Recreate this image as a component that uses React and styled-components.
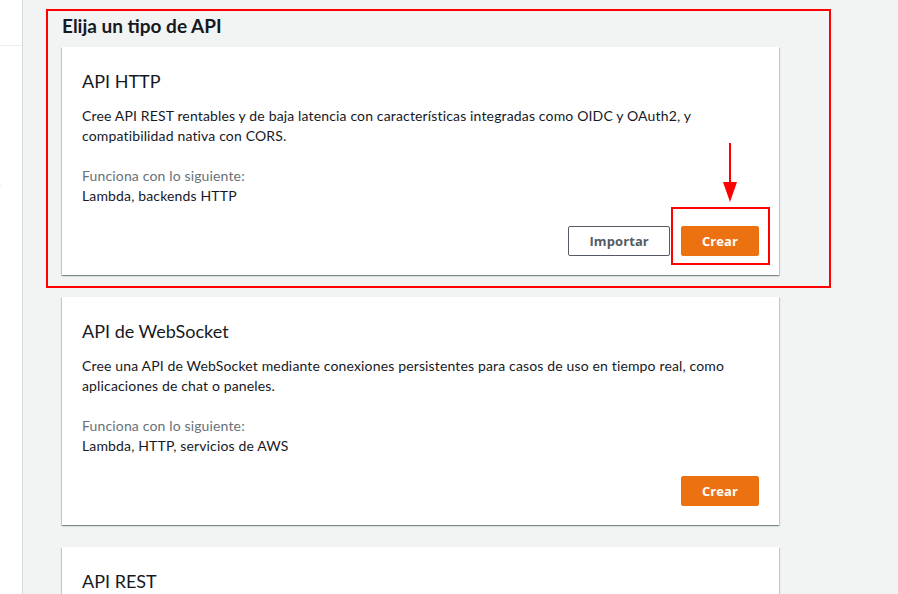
import styled, { createGlobalStyle } from 'styled-components';

const GlobalStyle = createGlobalStyle`
  html, body {
    margin: 0;
    padding: 0;
    background: #f2f3f3;
  }
  body {
    font-family: Lato, "Open Sans", sans-serif;
    color: #16191f;
  }
`;

const Page = styled.div`
  display: flex;
  height: 594px;
  overflow: hidden;
  background: #f2f3f3;
`;

const Sidebar = styled.div`
  width: 22px;
  flex-shrink: 0;
  background: #ffffff;
  border-right: 1px solid #d5dbdb;
`;

const SidebarRule = styled.div`
  height: ${(props) => props.top}px;
  border-bottom: 1px solid #eaeded;
  width: ${(props) => props.width || 22}px;
`;

const Main = styled.div`
  flex: 1;
  padding: 9px 0 0 39px;
`;

const Column = styled.div`
  width: 717px;
  display: flex;
  flex-direction: column;
`;

const Highlight = styled.section`
  margin: 0 -52px 9px -16px;
  padding: 4px 50px 11px 14px;
  border: 2px solid #ff0000;
`;

const Heading = styled.h2`
  margin: 0 0 10px;
  font-size: 19px;
  line-height: 22px;
  font-weight: 700;
  color: #16191f;
`;

const Card = styled.div`
  background: #ffffff;
  padding: 22px 20px 19px;
  margin-bottom: ${(props) => props.gap || 0}px;
  box-shadow: 0 1px 1px 0 rgba(0, 28, 36, 0.3),
    1px 1px 1px 0 rgba(0, 28, 36, 0.15), -1px 1px 1px 0 rgba(0, 28, 36, 0.15);
`;

const CardTitle = styled.h3`
  margin: 0 0 13px;
  font-size: 18px;
  line-height: 24px;
  font-weight: 400;
  color: #16191f;
`;

const Text = styled.p`
  margin: 0;
  font-size: 14px;
  line-height: 20px;
  letter-spacing: 0.15px;
  color: ${(props) => (props.muted ? '#687078' : '#16191f')};
`;

const Works = styled.div`
  margin-top: 20px;
`;

const Actions = styled.div`
  margin-top: 20px;
  display: flex;
  justify-content: flex-end;
  gap: 11px;
`;

const Button = styled.button`
  position: relative;
  font-family: "Open Sans", Lato, sans-serif;
  font-size: 13px;
  font-weight: 700;
  line-height: 20px;
  padding: 4px 20px;
  border-radius: 2px;
  letter-spacing: 0.1px;
  cursor: pointer;
  border: 1px solid
    ${(props) => (props.variant === 'primary' ? '#ec7211' : '#545b64')};
  background: ${(props) => (props.variant === 'primary' ? '#ec7211' : '#ffffff')};
  color: ${(props) => (props.variant === 'primary' ? '#ffffff' : '#545b64')};
`;

const Marker = styled.span`
  position: absolute;
  left: -11px;
  right: -12px;
  top: -20px;
  bottom: -10px;
  border: 2px solid #ff0000;
  pointer-events: none;
`;

const Arrow = styled.svg`
  position: absolute;
  left: calc(50% + 10px);
  top: -84px;
  margin-left: -9px;
  overflow: visible;
`;

const CreateWithMarker = () => (
  <Button variant='primary'>
    Crear
    <Marker />
    <Arrow width='18' height='60' viewBox='0 0 18 60'>
      <line x1='9' y1='0' x2='9' y2='42' stroke='#ff0000' strokeWidth='2' />
      <polygon points='2,39 16,39 9,59' fill='#ff0000' />
    </Arrow>
  </Button>
);

const App = () => {
  return (
    <Page>
      <GlobalStyle />
      <Sidebar>
        <SidebarRule top={45} />
        <SidebarRule top={139} width={2} />
      </Sidebar>
      <Main>
        <Column>
          <Highlight>
            <Heading>Elija un tipo de API</Heading>
            <Card>
              <CardTitle>API HTTP</CardTitle>
              <Text>
                Cree API REST rentables y de baja latencia con características
                integradas como OIDC y OAuth2, y compatibilidad nativa con CORS.
              </Text>
              <Works>
                <Text muted>Funciona con lo siguiente:</Text>
                <Text>Lambda, backends HTTP</Text>
              </Works>
              <Actions>
                <Button>Importar</Button>
                <CreateWithMarker />
              </Actions>
            </Card>
          </Highlight>
          <Card gap={22}>
            <CardTitle>API de WebSocket</CardTitle>
            <Text>
              Cree una API de WebSocket mediante conexiones persistentes para
              casos de uso en tiempo real, como aplicaciones de chat o paneles.
            </Text>
            <Works>
              <Text muted>Funciona con lo siguiente:</Text>
              <Text>Lambda, HTTP, servicios de AWS</Text>
            </Works>
            <Actions>
              <Button variant='primary'>Crear</Button>
            </Actions>
          </Card>
          <Card>
            <CardTitle>API REST</CardTitle>
          </Card>
        </Column>
      </Main>
    </Page>
  );
};

export default App;
